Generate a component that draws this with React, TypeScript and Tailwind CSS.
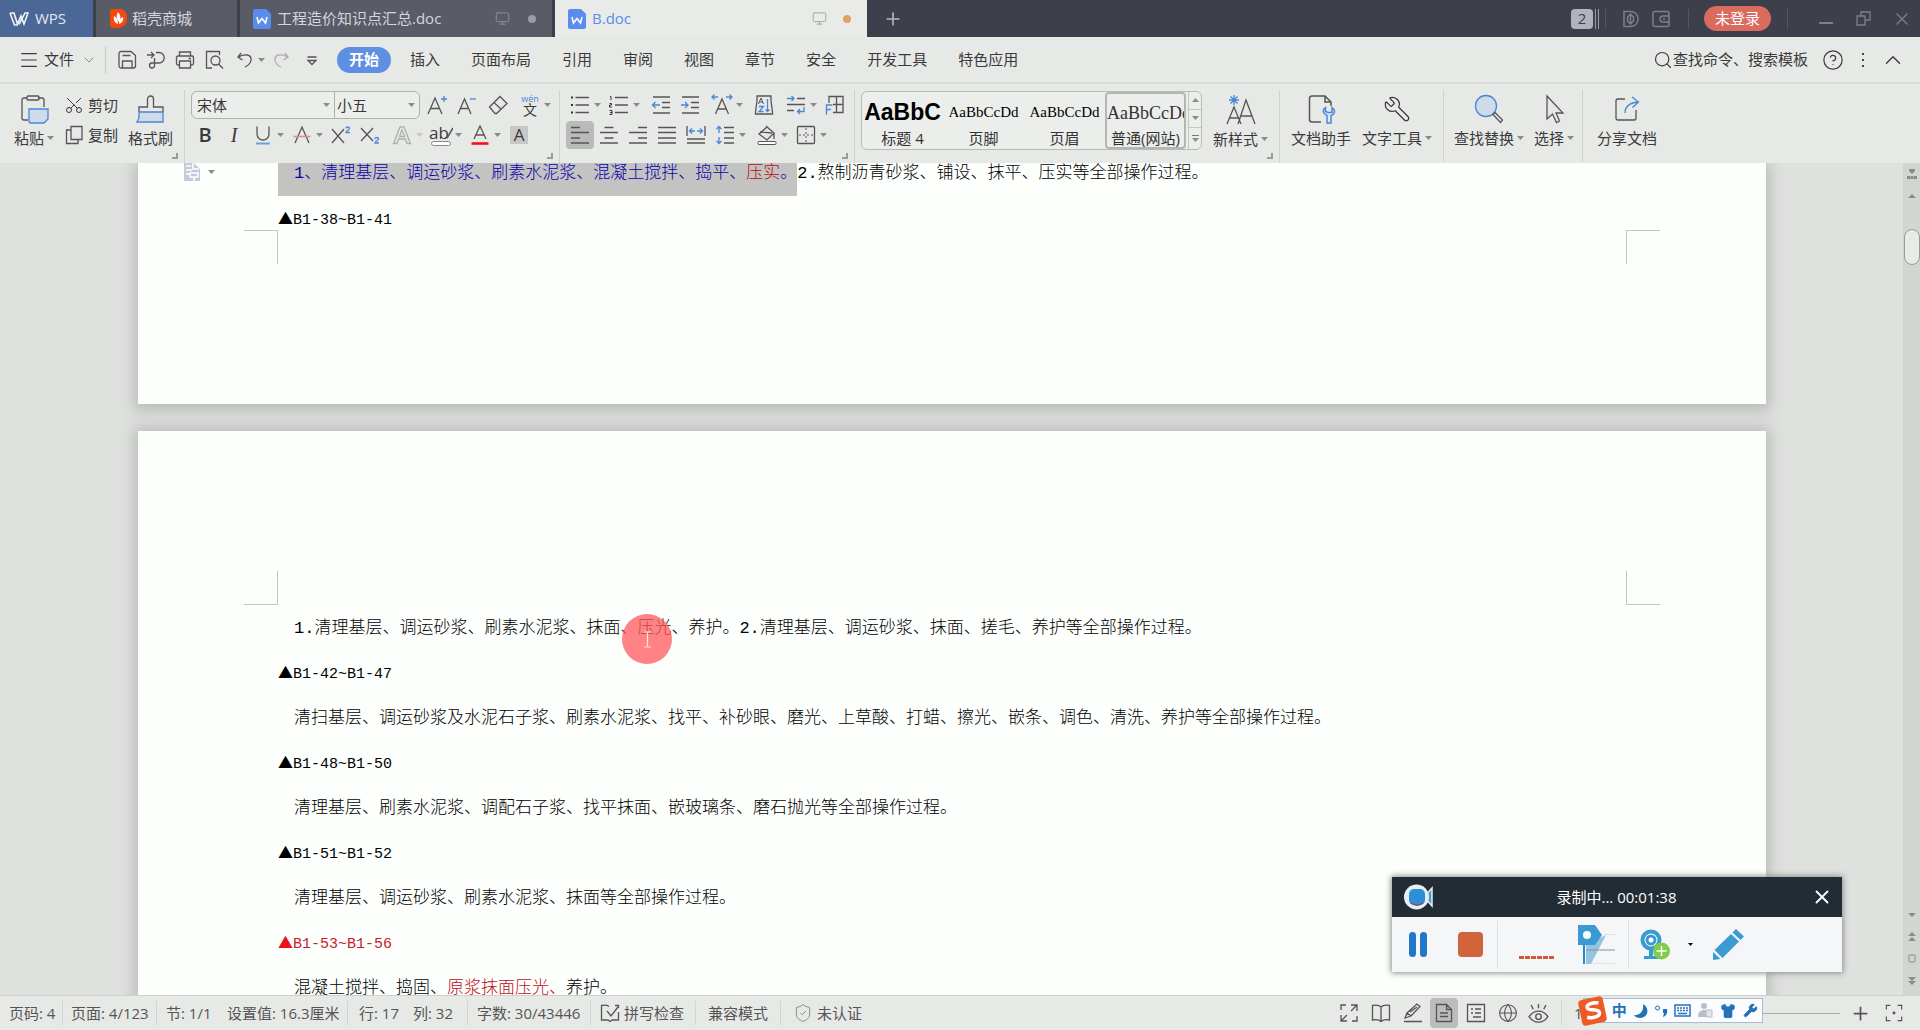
import { ReactNode } from "react";
import { ChevronDown, ChevronUp, CircleHelp, Globe, Menu, Monitor, Plus, Scissors, Search, ShieldCheck, Shirt, Wrench, X } from "lucide-react";

const menus = ["插入", "页面布局", "引用", "审阅", "视图", "章节", "安全", "开发工具", "特色应用"];

const BLUE = "#4a86d8";
const GRAY = "#555";

function Ico({ children, size = 20, box = 20 }: { children: ReactNode; size?: number; box?: number }) {
  return (
    <svg
      width={size}
      height={size}
      viewBox={`0 0 ${box} ${box}`}
      fill="none"
      stroke={GRAY}
      strokeWidth="1.3"
      className="shrink-0"
      aria-hidden="true"
    >
      {children}
    </svg>
  );
}

function Caret({ light = false }: { light?: boolean }) {
  return (
    <svg width="7" height="4" viewBox="0 0 7 4" className="shrink-0" aria-hidden="true">
      <path d="M0 0h7L3.5 4z" fill={light ? "#c4c6c4" : "#8a8c8a"} />
    </svg>
  );
}

function Tool({ label, children, active = false }: { label: string; children: ReactNode; active?: boolean }) {
  return (
    <div className="flex w-[29px] justify-start">
      <button
        aria-label={label}
        className={`flex h-7 w-7 items-center justify-center rounded ${active ? "bg-[#b9bbb9]" : ""}`}
      >
        {children}
      </button>
    </div>
  );
}

function SplitTool({
  label,
  children,
  spaced = false,
  light = false,
}: {
  label: string;
  children: ReactNode;
  spaced?: boolean;
  light?: boolean;
}) {
  return (
    <button aria-label={label} className={`flex w-[39px] items-center ${spaced ? "ml-[3px]" : ""}`}>
      <span className="flex w-7 justify-center">{children}</span>
      <Caret light={light} />
    </button>
  );
}

function BigTool({ label, caret = false, children }: { label: string; caret?: boolean; children: ReactNode }) {
  return (
    <button className="flex flex-col items-center gap-[3px]">
      <span className="flex h-8 items-center">{children}</span>
      <span className="flex items-center gap-[3px] leading-5">
        {label}
        {caret && <Caret />}
      </span>
    </button>
  );
}

function Launcher() {
  return (
    <button aria-label="更多设置" className="mt-[3px] mr-1.5 self-end">
      <svg width="6" height="6" viewBox="0 0 6 6" fill="none" stroke="#9a9c9a" strokeWidth="2">
        <path d="M5 0v5H0" />
      </svg>
    </button>
  );
}

function DocIcon() {
  return (
    <svg width="18" height="20" viewBox="0 0 18 20" aria-hidden="true">
      <path d="M2 0h11l5 5v13a2 2 0 0 1-2 2H2a2 2 0 0 1-2-2V2a2 2 0 0 1 2-2z" fill="#5a8cee" />
      <path d="M4 8l1.500 6L9 9.500l3.500 4.500L14 8" fill="none" stroke="#fff" strokeWidth="1.600" />
    </svg>
  );
}

function TitleBar() {
  return (
    <header className="flex h-[37px] shrink-0 bg-[#3d404b] text-[#d4d6dc]">
      <button className="flex w-[93px] items-center gap-1.5 bg-[#4a6795] pl-[9px] text-[#e4e9f2]">
        <svg width="20" height="14" viewBox="0 0 20 14" fill="none" stroke="#f0f3f8" strokeWidth="1.600" aria-hidden="true">
          <path d="M1 1h4l3.500 11L12 4l3 8 4-11h-3L10 12.500M1 1l4.500 12h3.500" />
        </svg>
        WPS
      </button>
      <button className="ml-[3px] flex w-[141px] items-center gap-[5px] bg-[#595b66] pl-3.5">
        <svg width="17" height="21" viewBox="0 0 17 21" aria-hidden="true">
          <path d="M1 1h7a8 8 0 0 1 9 9.500A9 9 0 0 1 8 20H4a4 4 0 0 1-4-4V3z" fill="#f4480d" />
          <path d="M8 4c3 3 3 7 1 10C6 11 6 8 8 4zM4 8c2 1 4 4 4 8-3-1-5-4-4-8zM13 9c1 3-1 6-4 7 0-3 1-6 4-7z" fill="#fff" />
        </svg>
        稻壳商城
      </button>
      <button className="ml-[3px] flex w-[312px] items-center bg-[#595b66] pl-[13px]">
        <DocIcon />
        <span className="ml-1.5 grow text-left">工程造价知识点汇总.doc</span>
        <Monitor size={15} strokeWidth={1.5} className="text-[#8e909a]" />
        <span className="mr-4 ml-[18px] h-2 w-2 rounded-full bg-[#9a9ca5]" />
      </button>
      <button className="ml-[3px] flex w-[312px] items-center bg-[#e9ebe9] pl-[13px] text-[#5a8cee]">
        <DocIcon />
        <span className="ml-1.5 grow text-left">B.doc</span>
        <Monitor size={15} strokeWidth={1.5} className="text-[#a3a5a3]" />
        <span className="mr-4 ml-4 h-2 w-2 rounded-full bg-[#dfa263]" />
      </button>
      <button aria-label="新建" className="ml-4">
        <Plus size={20} strokeWidth={2} className="text-[#b4b6bc]" />
      </button>

      <div className="ml-auto flex items-center text-[#7d808a]">
        <span className="flex gap-0.5">
          <span className="flex h-5 w-[22px] items-center justify-center rounded-sm bg-[#b0b3bc] text-[#3d404b]">2</span>
          <span className="h-5 w-px bg-[#9a9ca5]" />
          <span className="h-5 w-px bg-[#9a9ca5]" />
        </span>
        <span className="ml-1.5 h-5 w-px bg-[#555863]" />
        <button aria-label="稻壳会员" className="ml-4">
          <svg width="18" height="18" viewBox="0 0 18 18" fill="none" stroke="#7d808a" strokeWidth="1.500">
            <path d="M2 1.500h6c5 0 8 3 8 7.500s-3 7.500-8 7.500H2zM8.500 4v10M5.500 7v4l3 3 3-3V7l-3-3z" />
          </svg>
        </button>
        <button aria-label="卡包" className="ml-3">
          <svg width="18" height="18" viewBox="0 0 18 18" fill="none" stroke="#7d808a" strokeWidth="1.500">
            <path d="M17 6V3.500a2 2 0 0 0-2-2H3a2 2 0 0 0-2 2v11a2 2 0 0 0 2 2h12a2 2 0 0 0 2-2V12M17 6h-6a3 3 0 0 0 0 6h6zM11 9h2" />
          </svg>
        </button>
        <span className="ml-[18px] h-5 w-px bg-[#555863]" />
        <button className="ml-[15px] flex h-[25px] w-[67px] items-center justify-center rounded-full bg-[#d96b5f] text-white">
          未登录
        </button>
        <span className="ml-4 h-5 w-px bg-[#555863]" />
        <button aria-label="最小化" className="ml-[31px] h-4 w-3.5 pt-2">
          <span className="block h-0.5 bg-[#7d808a]" />
        </button>
        <button aria-label="还原" className="ml-[23px]">
          <svg width="15" height="15" viewBox="0 0 15 15" fill="none" stroke="#7d808a" strokeWidth="1.300">
            <path d="M1 5h8v9H1zM5 5V1h9v8H9" />
          </svg>
        </button>
        <button aria-label="关闭" className="mr-2 ml-[21px]">
          <X size={20} strokeWidth={1.5} />
        </button>
      </div>
    </header>
  );
}

function MenuBar() {
  return (
    <nav className="flex h-[47px] shrink-0 items-center border-b-2 border-[#d9dbd9] pr-3.5 pl-[18px]">
      <button className="flex items-center">
        <Menu size={22} strokeWidth={1.2} className="mr-1" />
        文件
        <ChevronDown size={16} strokeWidth={1.2} className="ml-[7px] text-[#777]" />
      </button>
      <span className="ml-2 h-7 w-px bg-[#c9cbc9]" />
      <div className="ml-[11px] flex items-center gap-[9px]">
        <button aria-label="保存">
          <Ico>
            <path d="M4 1.500h10l4.500 4V16a2 2 0 0 1-2 2H4a2 2 0 0 1-2-2V3.500a2 2 0 0 1 2-2zM5.500 18v-7h9.500v7M5.500 5.500h8" />
          </Ico>
        </button>
        <button aria-label="输出为PDF">
          <Ico>
            <path d="M1 5h6M5 2l3 3-3 3M10 2.500h3a5 5 0 0 1 0 10.500H6a2.500 2.500 0 1 0 2.500 2.500V8" />
          </Ico>
        </button>
        <button aria-label="打印">
          <Ico>
            <path d="M4.500 6V2h11v4M4.500 15H3a1.500 1.500 0 0 1-1.500-1.500v-6A1.500 1.500 0 0 1 3 6h14a1.500 1.500 0 0 1 1.500 1.500v6A1.500 1.500 0 0 1 17 15h-1.500M4.500 11h11v7h-11zM13.500 8.500H16" />
          </Ico>
        </button>
        <button aria-label="打印预览">
          <Ico>
            <path d="M8 18H2.500V1.500h13V5M14.500 14l4.500 4.500" />
            <circle cx="11.5" cy="10.500" r="4.500" />
          </Ico>
        </button>
        <button aria-label="撤销" className="ml-[3px] flex items-center gap-0.5">
          <Ico>
            <path d="M5 3L2 7l4.500 3M2.500 7C8 3.500 16 4 15 10.500c-.5 3-3 5-6 6.500" />
          </Ico>
          <Caret />
        </button>
        <button aria-label="恢复" className="-ml-1 opacity-40">
          <Ico>
            <path d="M15 3l3 4-4.500 3M17.500 7C12 3.500 4 4 5 10.500c.5 3 3 5 6 6.500" />
          </Ico>
        </button>
        <button aria-label="自定义快速访问工具栏" className="ml-[3px]">
          <Ico>
            <path d="M5.500 7h9M6 10.500h8l-4 4z" />
          </Ico>
        </button>
      </div>
      <button className="ml-[15px] h-[26px] w-[54px] rounded-full bg-[#5f8fe3] font-bold text-white">开始</button>
      <div className="ml-[19px] flex gap-[31px]">
        {menus.map((m) => (
          <button key={m}>{m}</button>
        ))}
      </div>
      <div className="ml-auto flex items-center">
        <button className="flex items-center">
          <Search size={20} strokeWidth={1.4} />
          查找命令、搜索模板
        </button>
        <button aria-label="帮助" className="ml-3.5">
          <CircleHelp size={22} strokeWidth={1.3} />
        </button>
        <button aria-label="更多" className="ml-[18px] flex flex-col gap-1">
          <span className="h-0.5 w-0.5 bg-[#444]" />
          <span className="h-0.5 w-0.5 bg-[#444]" />
          <span className="h-0.5 w-0.5 bg-[#444]" />
        </button>
        <button aria-label="收起功能区" className="ml-4">
          <ChevronUp size={26} strokeWidth={1.3} />
        </button>
      </div>
    </nav>
  );
}

function ClipboardGroup() {
  return (
    <div className="flex w-[185px] flex-col border-r border-[#d0d2d0]">
      <div className="flex h-[60px] gap-2.5 pt-[3px] pl-3.5">
        <BigTool label="粘贴" caret>
          <Ico size={30} box={30}>
            <path d="M8 4H5a2 2 0 0 0-2 2v18a2 2 0 0 0 2 2h4M19 4h4a2 2 0 0 1 2 2v7" />
            <rect x="8" y="2" width="12" height="4" rx="1" />
            <path d="M10 15h19v10l-4 4H12a2 2 0 0 1-2-2z" fill="#cfdbe8" stroke={BLUE} />
          </Ico>
        </BigTool>
        <div className="-mt-[3px] flex flex-col">
          <button className="flex h-[30px] items-center gap-1">
            <Scissors size={20} strokeWidth={1.2} className="rotate-[-90deg]" />
            剪切
          </button>
          <button className="flex h-[30px] items-center gap-1">
            <Ico>
              <path d="M7 1.500h11v13H7zM7 5H2.500v13.500H14v-4" />
            </Ico>
            复制
          </button>
        </div>
        <BigTool label="格式刷">
          <Ico size={30} box={30}>
            <path d="M3 18v-5h8.500V5a3 3 0 0 1 6 0v8H27v5" />
            <path d="M3 18h24v10H1c1.500-2 2-4 2-6z" fill="#cfdbe8" stroke={BLUE} />
          </Ico>
        </BigTool>
      </div>
      <Launcher />
    </div>
  );
}

function FontGroup() {
  return (
    <div className="flex w-[375px] flex-col border-r border-[#d0d2d0] pl-1.5">
      <div className="flex h-[30px] items-center">
        <div className="mr-[3px] flex h-7 w-[229px] rounded-md border border-[#b0b2b0] bg-[#eceeec]">
          <label className="flex w-[143px] items-center border-r border-[#b0b2b0] pr-1">
            <select aria-label="字体" className="min-w-0 grow appearance-none bg-transparent pl-[5px] outline-none">
              <option>宋体</option>
            </select>
            <Caret />
          </label>
          <label className="flex grow items-center pr-1">
            <select aria-label="字号" className="min-w-0 grow appearance-none bg-transparent pl-0.5 outline-none">
              <option>小五</option>
            </select>
            <Caret />
          </label>
        </div>
        <Tool label="增大字号">
          <Ico>
            <path d="M1 19L8 3l7 16M3.500 13.500h9" />
            <path d="M14 4h6M17 1v6" stroke={BLUE} />
          </Ico>
        </Tool>
        <Tool label="减小字号">
          <Ico>
            <path d="M2 19L8.500 4 15 19M4.500 13.500h8" />
            <path d="M14 4h6" stroke={BLUE} />
          </Ico>
        </Tool>
        <span className="w-[3px]" />
        <Tool label="清除格式">
          <Ico>
            <path d="M1.500 12L12 1.500l7 7L8.500 18.500H7zM6 7.500l7.500 7" />
          </Ico>
        </Tool>
        <SplitTool label="拼音指南" spaced>
          <span className="flex flex-col items-center">
            <span className="text-[9px] leading-[9px] text-[#4a86d8]">wén</span>
            <span className="text-[14px] leading-[14px]">文</span>
          </span>
        </SplitTool>
      </div>
      <div className="flex h-[30px] items-center">
        <Tool label="加粗">
          <span className="text-[20px] font-semibold">B</span>
        </Tool>
        <Tool label="倾斜">
          <span className="font-['Liberation_Serif',serif] text-[20px] italic">I</span>
        </Tool>
        <SplitTool label="下划线">
          <Ico>
            <path d="M4 1.500V9a6 6 0 0 0 12 0V1.500" />
            <path d="M3 18.500h14" stroke="#6f9fe0" strokeWidth="2" />
          </Ico>
        </SplitTool>
        <SplitTool label="删除线">
          <Ico>
            <path d="M3 18l7-16 7 16" />
            <path d="M1.500 11.500h17" stroke="#dc8f92" strokeWidth="1.600" />
          </Ico>
        </SplitTool>
        <Tool label="上标">
          <Ico>
            <path d="M1 4l12 14M13 4L1 18" />
            <path d="M15 3.500c0-2 3.500-2 3.500 0 0 1.500-3.500 2-3.500 4h4" stroke={BLUE} />
          </Ico>
        </Tool>
        <Tool label="下标">
          <Ico>
            <path d="M1 3l12 13M13 3L1 16" />
            <path d="M15 14c0-2 3.500-2 3.500 0 0 1.500-3.500 2-3.500 4h4" stroke={BLUE} />
          </Ico>
        </Tool>
        <SplitTool label="文字效果" spaced light>
          <Ico>
            <path d="M1.500 18.500L8 2h4l6.500 16.500h-3.500L13.500 14h-7l-1.500 4.500zM7.500 11.500h5L10 5z" stroke="#aeb0ae" />
          </Ico>
        </SplitTool>
        <SplitTool label="突出显示">
          <span className="flex flex-col items-center">
            <span className="flex text-[17px] leading-[16px]">
              ab
              <svg width="6" height="15" viewBox="0 0 6 15" fill="none" stroke="#555" strokeWidth="1.500" className="-ml-0.5">
                <path d="M6 3L0 13" />
              </svg>
            </span>
            <span className="h-[5px] w-5 rounded-sm border border-[#888] bg-white" />
          </span>
        </SplitTool>
        <SplitTool label="字体颜色">
          <Ico>
            <path d="M4 14l6-13 6 13M6 10h8" />
            <path d="M1.500 18.500h17" stroke="#f0141a" strokeWidth="2.600" />
          </Ico>
        </SplitTool>
        <Tool label="字符底纹">
          <span className="flex h-[18px] w-[18px] items-center justify-center bg-[#c6c8c6] text-[17px]">A</span>
        </Tool>
      </div>
      <Launcher />
    </div>
  );
}

function ParagraphGroup() {
  return (
    <div className="flex w-[295px] flex-col border-r border-[#d0d2d0] pl-1.5">
      <div className="flex h-[30px] items-center">
        <SplitTool label="项目符号">
          <Ico>
            <path d="M5.500 2.500H19M5.500 10H19M5.500 17.500H19" />
            <path d="M1 2.500h2M1 10h2M1 17.500h2" strokeWidth="2" stroke="#333" />
          </Ico>
        </SplitTool>
        <SplitTool label="编号">
          <Ico>
            <path d="M6 2.500h13M6 10h13M6 17.500h13" />
            <path d="M1 1.500h1V5M.5 8.500h2v1.500h-2v2h2.500M.5 15.500h2.500v4H.5M1 17.500h2" strokeWidth="1" stroke="#333" />
          </Ico>
        </SplitTool>
        <span className="w-[3px]" />
        <Tool label="减少缩进">
          <Ico>
            <path d="M2 2h17M11 7.500h8M11 12.500h8M2 18h17" />
            <path d="M9 10H1.500M4.500 7l-3 3 3 3" stroke={BLUE} />
          </Ico>
        </Tool>
        <Tool label="增加缩进">
          <Ico>
            <path d="M2 2h17M11 7.500h8M11 12.500h8M2 18h17" />
            <path d="M1 10h7M5 7l3 3-3 3" stroke={BLUE} />
          </Ico>
        </Tool>
        <SplitTool label="中文版式" spaced>
          <Ico size={22} box={22}>
            <path d="M4.500 20L11 5l6.500 15M7 15h8" />
            <path d="M7 3H1M3.500.5L1 3l2.500 2.500M15 3h6M18.500.5L21 3l-2.500 2.500" stroke={BLUE} />
          </Ico>
        </SplitTool>
        <span className="w-[3px]" />
        <Tool label="排序">
          <Ico>
            <path d="M3 1h14v5l1.500 11v2h-17v-2L3 6z" />
            <path d="M4.500 9L7 3l2.500 6M5.500 7h3" strokeWidth="1" />
            <path d="M5 11.500h4.500L5 16.500h4.500M13.500 4v12.500M11.500 14.500l2 2 2-2" stroke={BLUE} />
          </Ico>
        </Tool>
        <SplitTool label="制表位" spaced>
          <Ico>
            <path d="M11 3.500h8M1 9.500h18M1 15.500h7" />
            <path d="M1 3.500h7M5.500 1L8 3.500 5.500 6M18 12v4.500h-6.500M14 14l-2.500 2.500L14 19" stroke={BLUE} />
          </Ico>
        </SplitTool>
        <Tool label="插入表格">
          <Ico>
            <path d="M4 8V1.500h14v16H8M11.500 1.500v16M8 9.500h10" />
            <path d="M1.500 19.500V10h6M1.500 14.500H6" stroke={BLUE} />
          </Ico>
        </Tool>
      </div>
      <div className="flex h-[30px] items-center">
        <Tool label="左对齐" active>
          <Ico>
            <path d="M1 2.500h9M1 7.500h18M1 13h9M1 18h18" />
          </Ico>
        </Tool>
        <Tool label="居中对齐">
          <Ico>
            <path d="M5.500 2.500h9M1 7.500h18M5.500 13h9M1 18h18" />
          </Ico>
        </Tool>
        <Tool label="右对齐">
          <Ico>
            <path d="M10 2.500h9M1 7.500h18M10 13h9M1 18h18" />
          </Ico>
        </Tool>
        <Tool label="两端对齐">
          <Ico>
            <path d="M1 2.500h18M1 7.500h18M1 13h18M1 18h18" />
          </Ico>
        </Tool>
        <Tool label="分散对齐">
          <Ico>
            <path d="M1 1v10M19 1v10M1 14h18M1 18h18" />
            <path d="M9 6H3.500M6 3.500L3.500 6 6 8.500M11 6h5.500M14 3.500L16.500 6 14 8.500" stroke={BLUE} />
          </Ico>
        </Tool>
        <SplitTool label="行距">
          <Ico>
            <path d="M9 2.500h10M9 7.500h10M9 13h10M9 18h10" />
            <path d="M4 8V1.500M1.500 4L4 1.500 6.500 4M4 12v6.500M1.500 16L4 18.500 6.500 16" stroke={BLUE} />
          </Ico>
        </SplitTool>
        <SplitTool label="底纹颜色" spaced>
          <Ico>
            <path d="M9 1l8 7-7 7-8-6 8-7M17 8v6M3 7l12 1" />
            <rect x="1" y="16.500" width="18" height="3" rx="1" fill="#fff" strokeWidth="1" />
          </Ico>
        </SplitTool>
        <SplitTool label="边框">
          <Ico>
            <rect x="1.500" y="1.500" width="17" height="17" rx="1" />
            <path d="M10 3v14M3 10h14" strokeDasharray="2 2" strokeWidth="1" />
          </Ico>
        </SplitTool>
      </div>
      <Launcher />
    </div>
  );
}

function StyleGroup() {
  return (
    <div className="flex w-[425px] flex-col border-r border-[#d0d2d0] pl-1.5">
      <div className="flex h-[60px] items-center">
        <div className="flex h-[59px] w-[341px] rounded-md border border-[#b9bbb9] bg-[#eceeec] text-black">
          <button className="flex w-[81px] flex-col items-center overflow-hidden">
            <span className="h-9 font-['Liberation_Sans',sans-serif] text-[23px] leading-[40px] font-bold">AaBbC</span>
            <span className="leading-5 text-[#333]">标题 4</span>
          </button>
          <button className="flex w-[81px] flex-col items-center overflow-hidden">
            <span className="h-9 font-['Liberation_Serif',serif] leading-[40px]">AaBbCcDd</span>
            <span className="leading-5 text-[#333]">页脚</span>
          </button>
          <button className="flex w-[81px] flex-col items-center overflow-hidden">
            <span className="h-9 font-['Liberation_Serif',serif] leading-[40px]">AaBbCcDd</span>
            <span className="leading-5 text-[#333]">页眉</span>
          </button>
          <button className="flex w-[81px] flex-col items-center overflow-hidden rounded border-2 border-[#b4b6b4]">
            <span className="h-[34px] w-full text-left font-['Liberation_Serif',serif] text-[18px] leading-[38px] text-[#333]">
              AaBbCcDd
            </span>
            <span className="leading-5 text-[#333]">普通(网站)</span>
          </button>
          <div className="ml-0.5 flex grow flex-col divide-y divide-[#c4c6c4] border-l border-[#c4c6c4]">
            <button aria-label="上一行" className="flex grow items-center justify-center">
              <span className="rotate-180">
                <Caret />
              </span>
            </button>
            <button aria-label="下一行" className="flex grow items-center justify-center">
              <Caret />
            </button>
            <button aria-label="更多样式" className="flex grow flex-col items-center justify-center gap-0.5">
              <span className="h-px w-[7px] bg-[#777]" />
              <Caret />
            </button>
          </div>
        </div>
        <div className="ml-[11px] pt-[3px]">
          <BigTool label="新样式" caret>
            <Ico size={30} box={30}>
              <path d="M1 29l7-17 7 17M3.500 23h9M12 29L20 5l9 24M15 21h11" />
              <path d="M8 0v10M3 5h10M4.500 1.500l7 7M11.500 1.500l-7 7" stroke={BLUE} />
            </Ico>
          </BigTool>
        </div>
      </div>
      <Launcher />
    </div>
  );
}

function Ribbon() {
  return (
    <section className="flex h-[79px] shrink-0 pt-1.5 whitespace-nowrap">
      <ClipboardGroup />
      <FontGroup />
      <ParagraphGroup />
      <StyleGroup />
      <div className="flex h-[60px] w-[163px] gap-[11px] pt-[3px] pl-[11px]">
        <BigTool label="文档助手">
          <Ico size={30} box={30}>
            <path d="M15 28H6a2.500 2.500 0 0 1-2.500-2.500v-21A2.500 2.500 0 0 1 6 2h13l6 6v4M19 2v6h6" strokeWidth="1.500" />
            <path d="M19.500 13.500c-4 3-2 6.500 1.500 8V29h4v-7.500c4-1.500 5-5 1-8v5h-4l-2.500-1z" fill="#dde8f5" stroke={BLUE} strokeWidth="1.500" />
          </Ico>
        </BigTool>
        <BigTool label="文字工具" caret>
          <Wrench size={28} strokeWidth={1.1} className="scale-x-[-1]" />
        </BigTool>
      </div>
      <div className="flex h-[72px] gap-2.5 border-x border-[#d0d2d0] pt-[3px] pr-2 pl-2.5">
        <BigTool label="查找替换" caret>
          <Ico size={30} box={30}>
            <circle cx="12" cy="12" r="10.500" fill="#cfdbe8" stroke={BLUE} />
            <path d="M19 20.500l2-2 7.500 7.500-2 2.500z" />
          </Ico>
        </BigTool>
        <BigTool label="选择" caret>
          <Ico size={30} box={30}>
            <path d="M8 2v23l5.500-5 4 8.500 3-1.500-3.500-8h7z" />
          </Ico>
        </BigTool>
      </div>
      <div className="flex pt-[3px] pl-3.5">
        <BigTool label="分享文档">
          <Ico size={28} box={28}>
            <path d="M12 4H5a2 2 0 0 0-2 2v17a2 2 0 0 0 2 2h16a2 2 0 0 0 2-2v-8" />
            <path d="M12 18c0-6 4-10 13-11M19 2l6.500 5-6 5.500" stroke={BLUE} />
          </Ico>
        </BigTool>
      </div>
    </section>
  );
}

const BODY = "h-[45px] pl-4 leading-[47px]";

function Num({ children }: { children: ReactNode }) {
  return <span className="font-normal">{children}</span>;
}

function Code({ children, red = false }: { children: ReactNode; red?: boolean }) {
  return (
    <p className={`h-[45px] text-[15px] leading-[43px] font-normal ${red ? "text-[#c8202c]" : ""}`}>
      <span className={`font-['Noto_Sans_CJK_SC',sans-serif] ${red ? "text-[#e8141c]" : ""}`}>▲</span>
      {children}
    </p>
  );
}

function Document() {
  return (
    <main className="flex min-h-0 grow bg-[#dfe1df]">
      <div className="relative flex grow flex-col gap-[27px] overflow-hidden pr-[137px] pl-[138px] font-['Liberation_Mono','Noto_Sans_CJK_SC',monospace] text-[17px] font-light whitespace-nowrap text-black">
        <article className="flex h-[241px] shrink-0 flex-col bg-[#fdfffd] shadow-[0_3px_14px_4px_#b9bbb9]">
          <div className="-mt-3 flex h-[45px] px-[140px] leading-[45px]">
            <span className="bg-[#c3c4c2] pl-4 text-[#0c00a8]">
              <Num>1</Num>、清理基层、调运砂浆、刷素水泥浆、混凝土搅拌、捣平、<span className="text-[#b80c14]">压实</span>。
            </span>
            <span>
              <Num>2.</Num>熬制沥青砂浆、铺设、抹平、压实等全部操作过程。
            </span>
          </div>
          <div className="h-[34px] px-[140px]">
            <Code>B1-38~B1-41</Code>
          </div>
          <div className="flex justify-between px-[106px]">
            <span className="h-[34px] w-[34px] border-t border-r border-[#c4c6c4]" />
            <span className="h-[34px] w-[34px] border-t border-l border-[#c4c6c4]" />
          </div>
        </article>

        <article className="shrink-0 bg-[#fdfffd] pt-[140px] pb-10 shadow-[0_0_14px_4px_#b9bbb9]">
          <div className="flex justify-between px-[106px]">
            <span className="h-[34px] w-[34px] border-r border-b border-[#c4c6c4]" />
            <span className="h-[34px] w-[34px] border-b border-l border-[#c4c6c4]" />
          </div>
          <div className="px-[140px]">
            <p className={BODY}>
              <Num>1.</Num>清理基层、调运砂浆、刷素水泥浆、抹面、压光、养护。<Num>2.</Num>
              清理基层、调运砂浆、抹面、搓毛、养护等全部操作过程。
            </p>
            <Code>B1-42~B1-47</Code>
            <p className={BODY}>
              清扫基层、调运砂浆及水泥石子浆、刷素水泥浆、找平、补砂眼、磨光、上草酸、打蜡、擦光、嵌条、调色、清洗、养护等全部操作过程。
            </p>
            <Code>B1-48~B1-50</Code>
            <p className={BODY}>清理基层、刷素水泥浆、调配石子浆、找平抹面、嵌玻璃条、磨石抛光等全部操作过程。</p>
            <Code>B1-51~B1-52</Code>
            <p className={BODY}>清理基层、调运砂浆、刷素水泥浆、抹面等全部操作过程。</p>
            <Code red>B1-53~B1-56</Code>
            <p className={BODY}>
              混凝土搅拌、捣固、<span className="text-[#c00c18]">原浆抹面压光、</span>养护。
            </p>
          </div>
        </article>

        {/* paste options marker in the margin */}
        <button aria-label="粘贴选项" className="absolute top-0 left-[184px] flex items-center gap-2">
          <svg width="16" height="18" viewBox="0 0 16 18" aria-hidden="true">
            <path d="M0 0h10l6 6v12H0z" fill="#c3cbdd" />
            <path d="M2 3h5M2 7h6M2 11h4M9 0v6h6M6 10h8v4H6zM10 14v4" stroke="#fff" strokeWidth="1.500" fill="none" />
          </svg>
          <Caret />
        </button>

        {/* click highlight with the text cursor in it */}
        <div className="absolute top-[451px] left-[622px] flex h-[50px] w-[50px] items-center justify-center rounded-full bg-[#ff5a5c]/75">
          <svg width="9" height="17" viewBox="0 0 9 17" fill="none" stroke="#ffe3dc" strokeWidth="1.200" aria-hidden="true">
            <path d="M1 1h7M1 16h7M4.500 1v15" />
          </svg>
        </div>
      </div>

      <aside className="flex w-[17px] shrink-0 flex-col items-center bg-[#d3d5d3] pt-1.5">
        <svg width="10" height="32" viewBox="0 0 10 32" fill="#8a8c8a" aria-hidden="true">
          <path d="M2 0h6v2L5 5 2 2zM0 7h3v3H0zM3.500 7h3v3h-3zM7 7h3v3H7zM1 29h8L5 25z" />
        </svg>
        <button aria-label="滚动条" className="mt-7 h-9 w-4 rounded-full border border-[#9a9c9a] bg-[#e9ebe9]" />
        <svg width="10" height="76" viewBox="0 0 10 76" fill="#8a8c8a" className="mt-auto mb-[9px]" aria-hidden="true">
          <path d="M1 3h8L5 7zM1 26h8l-4-4zM1 31h8l-4-4zM1 67h8l-4 4zM1 71h8l-4 4z" />
          <rect x="2" y="45" width="6" height="7" rx="1" fill="none" stroke="#8a8c8a" />
        </svg>
      </aside>
    </main>
  );
}

function Divider() {
  return <span className="h-6 w-px bg-[#d3d5d3]" />;
}

function StatusBar() {
  return (
    <footer className="flex h-[35px] shrink-0 items-center border-t border-[#cfd1cf] pl-[9px] whitespace-nowrap text-[#555]">
      <div className="flex items-center">
        <span className="w-[53px]">页码: 4</span>
        <Divider />
        <span className="w-[93px] pl-2">页面: 4/123</span>
        <Divider />
        <span className="w-[70px] pl-[9px]">节: 1/1</span>
        <span className="w-[120px]">设置值: 16.3厘米</span>
        <Divider />
        <span className="w-[65px] pl-[11px]">行: 17</span>
        <span className="w-[54px]">列: 32</span>
        <Divider />
        <span className="w-[122px] pl-[9px]">字数: 30/43446</span>
        <Divider />
        <button className="flex w-[104px] items-center gap-1 pl-[9px]">
          <Ico>
            <path d="M9 3.500C7 2 4 2 1.500 2.500V17H8l2 1.500 2-1.500h6.500V9M18.500 5V2.500H15M7 8l4 5 7-9" />
          </Ico>
          拼写检查
        </button>
        <Divider />
        <button className="w-[84px]">兼容模式</button>
        <Divider />
        <button className="flex items-center gap-1 pl-3">
          <ShieldCheck size={20} strokeWidth={1.2} className="text-[#888]" />
          未认证
        </button>
      </div>

      <div className="ml-auto flex items-center pr-[17px]">
        <button aria-label="全屏显示" className="w-8">
          <Ico>
            <path d="M12 2h6v6M18 2l-6 6M8 18H2v-6M2 18l6-6M2 7V2h5M18 13v5h-5" />
          </Ico>
        </button>
        <button aria-label="阅读版式" className="w-8">
          <Ico>
            <path d="M10 4C8 2 4 2 1.500 2.500V17C4 16.500 8 16.500 10 18.500 12 16.500 16 16.500 18.500 17V2.500C16 2 12 2 10 4zM10 4v14.500" />
          </Ico>
        </button>
        <button aria-label="写作模式" className="w-[27px]">
          <Ico>
            <path d="M2 15l2-5L14 1l3 2.500L8 13l-6 2zM7 9l7-5M1 18.500h18M4 10l4 3" />
          </Ico>
        </button>
        <button aria-label="页面视图" className="mr-2 flex h-[30px] w-7 items-center justify-center rounded bg-[#bbbdbb]">
          <Ico>
            <path d="M2.500 1.500h10l5 5v12h-15zM12.500 1.500v5h5M6 10h8M6 13.500h8" />
          </Ico>
        </button>
        <button aria-label="大纲" className="w-8">
          <Ico>
            <path d="M1.500 1.500h17v17h-17zM5 6h2M9 6h6M5 10h2M9 10h6M7 14h8" />
          </Ico>
        </button>
        <button aria-label="Web版式" className="w-[30px]">
          <Globe size={20} strokeWidth={1.3} />
        </button>
        <button aria-label="护眼模式" className="mr-3">
          <Ico size={21}>
            <path d="M1 13c5-7 13-7 18 0-5 7-13 7-18 0zM10 5V1M5 6L3 2M15 6l2-4" />
            <circle cx="10" cy="13" r="2.600" />
          </Ico>
        </button>
        <Divider />
        <label htmlFor="zoom" className="ml-3 w-12">
          100%
        </label>
        <input
          id="zoom"
          type="range"
          defaultValue={30}
          className="h-4 w-[218px] appearance-none bg-transparent [&::-webkit-slider-runnable-track]:h-px [&::-webkit-slider-runnable-track]:bg-[#a9aba9] [&::-webkit-slider-thumb]:-mt-1 [&::-webkit-slider-thumb]:h-2 [&::-webkit-slider-thumb]:w-2 [&::-webkit-slider-thumb]:appearance-none [&::-webkit-slider-thumb]:rounded-full [&::-webkit-slider-thumb]:bg-[#777]"
        />
        <button aria-label="放大" className="ml-2.5">
          <Plus size={21} strokeWidth={2} />
        </button>
        <button aria-label="最佳显示比例" className="ml-3.5">
          <Ico size={18}>
            <path d="M1.500 6V1.500H6M14 1.500h4.500V6M18.500 14v4.500H14M6 18.500H1.500V14" />
            <circle cx="10" cy="10" r="1" fill="#555" />
          </Ico>
        </button>
      </div>
    </footer>
  );
}

function Recorder() {
  return (
    <div className="absolute right-[78px] bottom-[58px] w-[450px] bg-[#f4f6f7] shadow-[0_0_6px_1px_#8a8c8a]">
      <div className="flex h-10 items-center bg-[#222c35] pr-3 pl-3 text-white">
        <svg width="29" height="26" viewBox="0 0 29 26" aria-hidden="true">
          <path d="M20 13l8-9v18z" fill="#3f9fe0" stroke="#e8eef4" strokeWidth="1.500" />
          <circle cx="12.500" cy="13" r="12.500" fill="#e8eef4" />
          <rect x="5" y="5" width="16" height="16" rx="5" fill="#2c8fd8" />
          <path d="M7 19c4 3 8 3 12 0" stroke="#8a4a66" strokeWidth="1.500" fill="none" />
        </svg>
        <span className="grow pr-3.5 text-center">录制中... 00:01:38</span>
        <button aria-label="关闭录制">
          <X size={22} strokeWidth={2} className="-mx-[3px]" />
        </button>
      </div>
      <div className="flex h-[55px] items-center pl-[17px]">
        <button aria-label="暂停" className="flex gap-1">
          <span className="h-[25px] w-[7px] rounded-sm bg-[#2277c8]" />
          <span className="h-[25px] w-[7px] rounded-sm bg-[#2277c8]" />
        </button>
        <button aria-label="停止" className="ml-[31px] h-[25px] w-[25px] rounded bg-[#d2643c]" />
        <span className="ml-3.5 h-12 w-px bg-[#dcdfe0]" />
        <div className="mt-[26px] ml-[21px] flex gap-px">
          {[0, 1, 2, 3, 4, 5].map((i) => (
            <span key={i} className="h-[3px] w-[5px] bg-[#cf5a3c]" />
          ))}
        </div>
        <svg width="38" height="40" viewBox="0 0 38 40" className="ml-6" aria-hidden="true">
          <path d="M28 10L13 39H8V20z" fill="#93c4e2" />
          <path d="M0 0h17l7 10-7 10H0z" fill="#3a9bd2" />
          <circle cx="9" cy="10" r="4" fill="#fff" />
          <path d="M8 25h29" stroke="#8a9096" />
          <path d="M5 20h2v19H5z" fill="#2b88c4" />
          <path d="M26 9.500h11M14 38.500h23" stroke="#dfe3e5" />
        </svg>
        <span className="ml-3 h-12 w-px bg-[#dcdfe0]" />
        <button aria-label="摄像头" className="ml-[11px]">
          <svg width="31" height="31" viewBox="0 0 31 31">
            <circle cx="11" cy="11" r="8.500" fill="#fff" stroke="#3a9bd2" strokeWidth="4" />
            <circle cx="11" cy="11" r="4" fill="none" stroke="#3a9bd2" strokeWidth="3" />
            <path d="M9 21h4v6h5v3H4v-3h5z" fill="#3a9bd2" />
            <circle cx="21.500" cy="22" r="8.500" fill="#82cc4c" />
            <path d="M16.500 22h10M21.500 17v10" stroke="#fff" strokeWidth="1.500" />
          </svg>
        </button>
        <button aria-label="摄像头选项" className="ml-[17px]">
          <svg width="5" height="3" viewBox="0 0 5 3">
            <path d="M0 0h5L2.500 3z" />
          </svg>
        </button>
        <button aria-label="画笔" className="ml-5">
          <svg width="31" height="31" viewBox="0 0 31 31" fill="#3a9bd2">
            <path d="M0 31V23l7.500 7zM1.500 21L18 5l8 7.500L9.500 29zM19.500 3.500L23 0l8 7.500-3.500 3.500z" />
          </svg>
        </button>
      </div>
    </div>
  );
}

function ImeBar() {
  return (
    <div className="absolute right-[157px] bottom-[7px] flex h-[25px] w-[180px] items-center justify-between border border-[#a9bcd4] bg-[#fafcfd] pr-1 text-[#2670b8]">
      <span className="-ml-1 flex h-[26px] w-[25px] -rotate-12 items-center justify-center rounded bg-[#ee5a24]">
        <svg width="18" height="20" viewBox="0 0 18 20" fill="none" stroke="#fff" strokeWidth="3.500" aria-hidden="true">
          <path d="M16 3.500C11 1.500 4 2 4 5.500c0 4 11 3 11 7.500 0 4-8 4.500-13 2" />
        </svg>
      </span>
      <span className="font-bold">中</span>
      <svg width="14" height="14" viewBox="0 0 14 14" fill="#2670b8" aria-hidden="true">
        <path d="M9 0c8 5 4 14-3 14-3 0-5-1-6-3 6 1 10-4 9-11z" />
      </svg>
      <svg width="13" height="14" viewBox="0 0 13 14" aria-hidden="true">
        <circle cx="2.500" cy="4" r="2" fill="none" stroke="#2670b8" />
        <path d="M8 5h4c1 4-1 7-4 8l1-4H8z" fill="#2670b8" />
      </svg>
      <svg width="17" height="13" viewBox="0 0 17 13" fill="none" stroke="#2670b8" strokeWidth="1.500" aria-hidden="true">
        <rect x="1" y="1" width="15" height="11" />
        <path d="M3 4h11M3 6.500h11" strokeDasharray="2 1" />
        <path d="M4 9.500h9" />
      </svg>
      <svg width="15" height="15" viewBox="0 0 15 15" fill="#b9bec6" aria-hidden="true">
        <circle cx="6" cy="3" r="3" />
        <path d="M0 14c0-5 2-7 6-7h3v7z" />
        <path d="M8 7h6v7H8z" fill="#e3e6ea" stroke="#b9bec6" />
      </svg>
      <Shirt size={16} fill="#2670b8" strokeWidth={1} />
      <Wrench size={15} fill="#2670b8" strokeWidth={1.5} />
    </div>
  );
}

export default function App() {
  return (
    <div className="relative flex h-screen flex-col overflow-hidden bg-[#e7e9e7] font-['Open_Sans','Noto_Sans_CJK_SC',sans-serif] text-[15px] text-[#3a3a3a]">
      <TitleBar />
      <MenuBar />
      <Ribbon />
      <Document />
      <StatusBar />
      <ImeBar />
      <Recorder />
    </div>
  );
}
